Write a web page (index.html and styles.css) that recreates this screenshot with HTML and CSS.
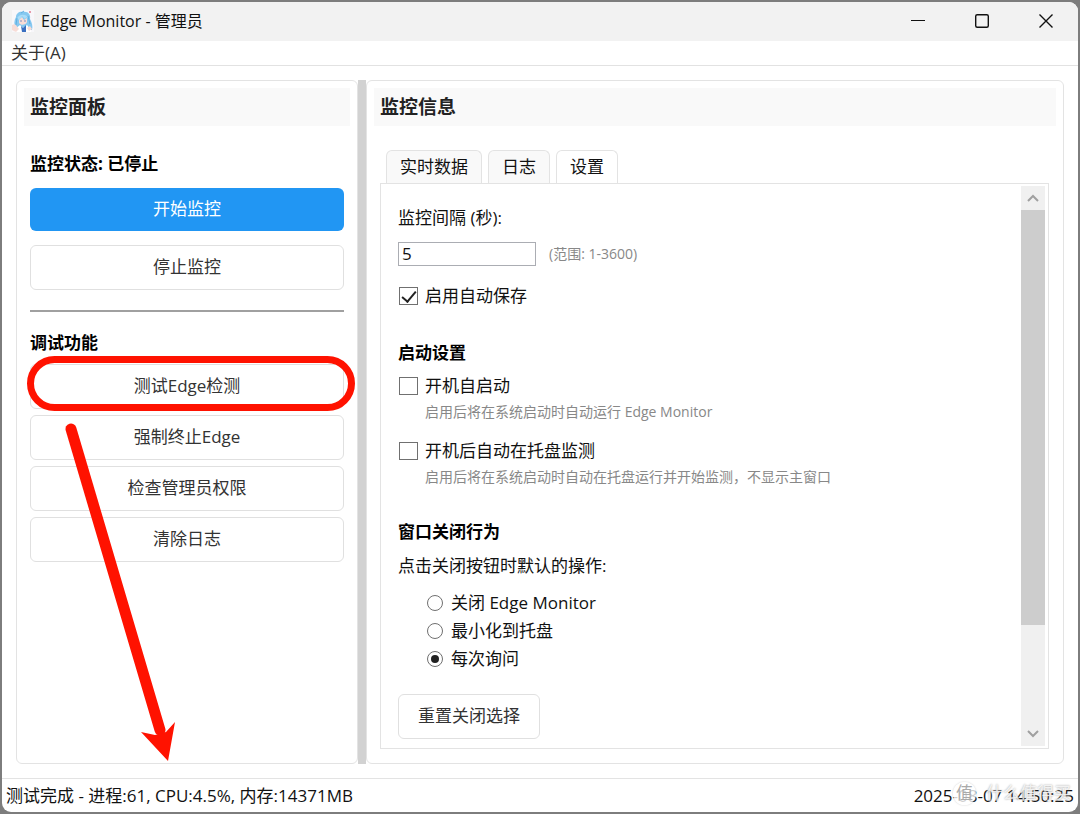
FILE: index.html
```html
<!DOCTYPE html>
<html lang="zh-CN">
<head>
    <meta charset="UTF-8">
    <meta name="viewport" content="width=device-width, initial-scale=1.0">
    <title>Edge Monitor</title>
    <link rel="stylesheet" href="styles.css">
</head>
<body>

    <div class="window">
        <!-- 标题栏 -->
        <header class="titlebar">
            <svg class="app-icon" viewBox="0 0 22 22">
                <rect width="22" height="22" fill="#f8f7fa"/>
                <path d="M3 18 C2 14 2 10 4 7 C4 3 8 1 11 2 C16 1 19 5 18 9 C20 13 21 16 20 20 L3 20 Z" fill="#86c8f0"/>
                <path d="M5 9 C6 4 15 3 17 9 L15 7 L13 9 L10 6 L8 10 Z" fill="#a9dcf8"/>
                <path d="M7 10 L10 7 L12 10 L15 8 L15 12 C14 15 9 16 7 13 Z" fill="#f9dcd6"/>
                <path d="M3 19 L8 15 L11 18 L15 15 L19 20 L19 22 L3 22 Z" fill="#fff"/>
                <path d="M9 16 L11 18 L14 15 L14 22 L10 22 Z" fill="#3b6fc0"/>
                <path d="M0 15 L3 14 L7 19 L4 22 L0 20 Z" fill="#f7dcd6"/>
                <path d="M15 18 L18 16 L20 19 L17 21 Z" fill="#f7dcd6"/>
                <path d="M8 11 h2 M12 11 h2" stroke="#7b8fc0"/>
                <path d="M9 3 L12 1 M16 6 L18 14 M5 8 L4 15" stroke="#62afe0"/>
                <path d="M18 1 v2" stroke="#d4405a"/>
            </svg>
            <span class="title">Edge Monitor - 管理员</span>
            <div class="window-buttons">
                <button type="button" aria-label="最小化"><svg viewBox="0 0 16 16"><path d="M1 7.500h14" stroke-width="1"/></svg></button>
                <button type="button" aria-label="最大化"><svg viewBox="0 0 16 16"><rect x="1.700" y="1.700" width="12.600" height="12.600" rx="1.500"/></svg></button>
                <button type="button" aria-label="关闭"><svg viewBox="0 0 16 16"><path d="M1.500 1.500l13 13M14.500 1.500l-13 13"/></svg></button>
            </div>
        </header>

        <!-- 菜单 -->
        <nav class="menubar"><a href="#about">关于(A)</a></nav>

        <main class="content">
            <!-- 左侧：监控面板 -->
            <section class="panel">
                <h2>监控面板</h2>
                <div class="panel-body">
                    <p class="status">监控状态: 已停止</p>
                    <button type="button" class="btn btn-primary">开始监控</button>
                    <button type="button" class="btn btn-stop">停止监控</button>
                    <hr>
                    <h3>调试功能</h3>
                    <div class="debug-buttons">
                        <div class="marked">
                            <button type="button" class="btn">测试Edge检测</button>
                        </div>
                        <button type="button" class="btn">强制终止Edge</button>
                        <button type="button" class="btn">检查管理员权限</button>
                        <button type="button" class="btn">清除日志</button>
                    </div>
                </div>
                <svg class="arrow" viewBox="0 0 120 344">
                    <path d="M11 11 L100 312" stroke-width="11"/>
                    <path d="M81 314 L95 317 L106 314 L115 304 L108 343 Z"/>
                </svg>
            </section>

            <div class="splitter"></div>

            <!-- 右侧：监控信息 -->
            <section class="panel">
                <h2>监控信息</h2>
                <div class="tabs" role="tablist">
                    <button type="button" role="tab">实时数据</button>
                    <button type="button" role="tab">日志</button>
                    <button type="button" role="tab" class="active" aria-selected="true">设置</button>
                </div>
                <div class="tab-page">
                    <form class="settings">
                        <label for="interval">监控间隔 (秒):</label>
                        <div class="interval-row">
                            <input type="text" id="interval" value="5">
                            <span class="hint">(范围: 1-3600)</span>
                        </div>
                        <label class="option autosave"><input type="checkbox" checked>启用自动保存</label>

                        <h3>启动设置</h3>
                        <label class="option"><input type="checkbox">开机自启动</label>
                        <p class="hint">启用后将在系统启动时自动运行 Edge Monitor</p>
                        <label class="option tray"><input type="checkbox">开机后自动在托盘监测</label>
                        <p class="hint">启用后将在系统启动时自动在托盘运行并开始监测，不显示主窗口</p>

                        <h3>窗口关闭行为</h3>
                        <p class="question">点击关闭按钮时默认的操作:</p>
                        <div class="radios">
                            <label class="option"><input type="radio" name="close">关闭 Edge Monitor</label>
                            <label class="option"><input type="radio" name="close">最小化到托盘</label>
                            <label class="option"><input type="radio" name="close" checked>每次询问</label>
                        </div>
                        <button type="button" class="btn btn-reset">重置关闭选择</button>
                    </form>
                    <div class="scrollbar">
                        <button type="button" aria-label="向上"><svg viewBox="0 0 12 8"><path d="M1 7l5-5 5 5"/></svg></button>
                        <div class="track"><div class="thumb"></div></div>
                        <button type="button" aria-label="向下"><svg viewBox="0 0 12 8"><path d="M1 1l5 5 5-5"/></svg></button>
                    </div>
                </div>
            </section>
        </main>

        <!-- 状态栏 -->
        <footer class="statusbar">
            <span>测试完成 - 进程:61, CPU:4.5%, 内存:14371MB</span>
            <span>2025-08-07 14:50:25</span>
            <div class="watermark"><span class="logo">值</span>什么值得买</div>
        </footer>
    </div>

</body>
</html>
```
FILE: styles.css
```css
/* 通用 */
* {
    box-sizing: border-box;
}

body {
    margin: 0;
    padding: 2px;
    min-height: 100vh;
    display: flex;
    background: #7d7d7d;
    color: #111;
    font-family: "Open Sans", "Noto Sans CJK SC", sans-serif;
    font-size: 17px;
    line-height: 24px;
}

h2, h3, p {
    margin: 0;
}

h3, .status {
    font-size: 17px;
    font-weight: bold;
    color: #000;
}

button, input {
    font: inherit;
    color: inherit;
}

.window {
    flex: 1;
    display: flex;
    flex-direction: column;
    background: #fff;
    border-radius: 9px;
    overflow: hidden;
}

/* 标题栏 */
.titlebar {
    display: flex;
    align-items: center;
    height: 39px;
    padding: 0 0 2px 10px;
    background: #f2f2f2;
}

.title {
    font-size: 16px;
}

.app-icon {
    width: 22px;
    height: 22px;
    margin-right: 7px;
}

.window-buttons {
    margin-left: auto;
    display: flex;
}

.window-buttons button {
    width: 64px;
    height: 36px;
    padding: 0;
    border: none;
    background: none;
}

.window-buttons svg {
    display: block;
    width: 16px;
    height: 16px;
    margin: auto;
    fill: none;
    stroke: #111;
    stroke-width: 1.4;
}

.menubar {
    height: 25px;
    padding-left: 9px;
    border-bottom: 1px solid #e2e2e2;
}

.menubar a {
    color: #333;
    text-decoration: none;
}

/* 主区域 */
.content {
    flex: 1;
    display: grid;
    grid-template-columns: 342px 8px 1fr;
    padding: 14px;
}

.panel {
    position: relative;
    display: flex;
    flex-direction: column;
    padding: 7px;
    border: 1px solid #e3e3e3;
    border-radius: 6px;
}

.panel h2 {
    height: 38px;
    padding: 0 6px;
    background: #f9f9f9;
    color: #222;
    font-size: 19px;
    line-height: 38px;
}

.panel-body {
    display: flex;
    flex-direction: column;
    padding: 26px 6px 0;
}

.splitter {
    background: #d2d2d2;
}

/* 按钮 */
.btn {
    width: 100%;
    height: 45px;
    padding: 0 0 2px;
    border: 1px solid #e0e0e0;
    border-radius: 6px;
    background: #fff;
    color: #333;
}

.btn-primary {
    height: 43px;
    margin-top: 12px;
    border: none;
    background: #2196f3;
    color: #fff;
}

.btn-stop {
    margin-top: 14px;
}

hr {
    width: 100%;
    height: 2px;
    margin: 20px 0 19px;
    border: none;
    background: #a0a0a0;
}

.debug-buttons {
    display: flex;
    flex-direction: column;
    gap: 6px;
    margin-top: 9px;
}

/* 红色标注 */
.marked {
    position: relative;
}

.marked::after {
    content: "";
    position: absolute;
    inset: -8px -11px -2px -3px;
    border: 7px solid #ff1200;
    border-radius: 28px;
    pointer-events: none;
}

.arrow {
    position: absolute;
    left: 43px;
    top: 337px;
    width: 120px;
    height: 344px;
    fill: #ff1200;
    stroke: #ff1200;
    stroke-width: 0;
    stroke-linecap: round;
    pointer-events: none;
}

/* 选项卡 */
.tabs {
    display: flex;
    gap: 6px;
    margin: 24px 12px 0;
}

.tabs button {
    height: 33px;
    padding: 0 13px;
    border: 1px solid #e3e3e3;
    border-bottom: none;
    border-radius: 6px 6px 0 0;
    background: #f9f9f9;
}

.tabs .active {
    background: #fff;
}

.tab-page {
    flex: 1;
    display: flex;
    margin: 0 7px 7px 6px;
    border: 1px solid #e3e3e3;
}

.settings {
    flex: 1;
    display: flex;
    flex-direction: column;
    padding: 22px 17px 8px;
}

.interval-row {
    display: flex;
    align-items: center;
    gap: 13px;
    margin-top: 12px;
}

.interval-row input {
    width: 138px;
    height: 24px;
    padding: 0 3px;
    border: 1px solid #abadb3;
    background: #fff;
}

.hint {
    color: #888;
    font-size: 14px;
    line-height: 20px;
}

p.hint {
    margin: 4px 0 0 27px;
}

.option {
    display: flex;
    align-items: center;
}

.autosave {
    margin-top: 18px;
}

.tray {
    margin-top: 17px;
}

.settings h3 {
    margin: 33px 0 9px;
}

.question {
    padding-top: 1px;
}

.option input {
    appearance: none;
    width: 19px;
    height: 18px;
    margin: 0 7px 0 1px;
    border: 1px solid #707070;
    background: #fff;
}

.option input[type="checkbox"]:checked::after {
    content: "";
    display: block;
    width: 6px;
    height: 12px;
    margin: 0 auto;
    border: solid #212121;
    border-width: 0 2px 2px 0;
    transform: rotate(40deg);
}

.option input[type="radio"] {
    width: 16px;
    height: 16px;
    margin: 0 8px 0 0;
    padding: 3px;
    border-radius: 50%;
}

.option input[type="radio"]:checked {
    background: #212121 content-box;
}

.radios {
    display: flex;
    flex-direction: column;
    gap: 4px;
    margin: 13px 0 23px 29px;
}

.btn-reset {
    width: 142px;
}

/* 滚动条 */
.scrollbar {
    display: flex;
    flex-direction: column;
    width: 24px;
    margin: 2px 3px;
    background: #f0f0f0;
}

.scrollbar button {
    height: 24px;
    padding: 0;
    border: none;
    background: none;
}

.scrollbar svg {
    display: block;
    width: 12px;
    height: 8px;
    margin: auto;
    fill: none;
    stroke: #a0a0a0;
    stroke-width: 2;
}

.track {
    flex: 1;
}

.thumb {
    height: 81%;
    background: #cdcdcd;
}

/* 状态栏 */
.statusbar {
    position: relative;
    display: flex;
    justify-content: space-between;
    height: 34px;
    padding: 5px 4px;
    border-top: 1px solid #e3e3e3;
}

.watermark {
    position: absolute;
    right: 7px;
    top: 2px;
    display: flex;
    align-items: center;
    gap: 10px;
    color: rgba(255, 255, 255, 0.8);
    text-shadow: 0 0 2px #999;
}

.logo {
    width: 23px;
    height: 23px;
    border-radius: 50%;
    background: rgba(255, 255, 255, 0.8);
    box-shadow: 0 0 2px #ccc;
    color: #aaa;
    line-height: 22px;
    text-align: center;
    text-shadow: none;
}
```
